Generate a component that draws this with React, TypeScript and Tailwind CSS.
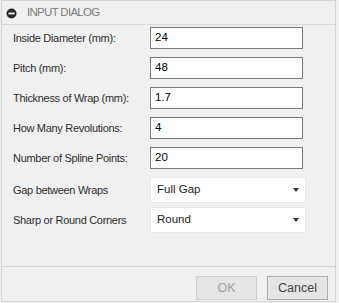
import type {ReactElement} from "react";

const fields = [
    {label: "Inside Diameter (mm):", value: "24"},
    {label: "Pitch (mm):", value: "48"},
    {label: "Thickness of Wrap (mm):", value: "1.7"},
    {label: "How Many Revolutions:", value: "4"},
    {label: "Number of Spline Points:", value: "20"},
];

const selects = [
    {label: "Gap between Wraps", value: "Full Gap"},
    {label: "Sharp or Round Corners", value: "Round"},
];

export default function App(): ReactElement {
    return (
        <div className="w-[339px] h-[303px] bg-[#f0f0f0] pl-[1px] font-['Liberation_Sans',Arial,sans-serif]">
            <div className="w-[335px] h-[302px] flex flex-col border border-[#d6d6d6]">
                { /* title bar */ }
                <div className="h-[24px] flex items-center border-b border-[#d9d9d9] pl-[4px]">
                    <svg width="11" height="11" viewBox="0 0 11 11" className="mt-[1px]">
                        <circle cx="5.5" cy="5.5" r="5" fill="#2b2b2b" />
                        <rect x="2.5" y="4.6" width="6" height="1.8" fill="#fff" />
                    </svg>
                    <span className="ml-[10px] text-[11.5px] tracking-[-0.7px] text-[#7d7d7d]">INPUT DIALOG</span>
                </div>

                { /* form body */ }
                <div className="flex-1 pt-[2px] pl-[11px] border-b border-[#d4d4d4]">
                    {fields.map((f) => (
                        <div key={f.label} className="flex items-center h-[22px] mb-[8px]">
                            <span className="w-[137px] text-[11px] tracking-[-0.3px] text-[#2e2e2e]">{f.label}</span>
                            <div className="w-[153px] h-[22px] flex items-center bg-white border border-[#7a7a7a] pl-[4px] text-[11.5px] text-black">
                                {f.value}
                            </div>
                        </div>
                    ))}
                    {selects.map((s) => (
                        <div key={s.label} className="flex items-center h-[26px] mb-[4px]">
                            <span className="w-[137px] text-[11px] tracking-[-0.3px] text-[#2e2e2e]">{s.label}</span>
                            <div className="w-[156px] h-[26px] flex items-center justify-between bg-white border border-[#e8e8e8] pl-[6px] pr-[6px] text-[11.5px] text-[#222]">
                                <span>{s.value}</span>
                                <svg width="6" height="4" viewBox="0 0 6 4">
                                    <path d="M0 0 H6 L3 4 Z" fill="#333" />
                                </svg>
                            </div>
                        </div>
                    ))}
                </div>

                { /* footer buttons */ }
                <div className="h-[34px] flex justify-end items-start pt-[9px] pr-[7px] gap-[10px]">
                    <button type="button" className="w-[61px] h-[24px] bg-[#e5e5e5] border border-[#cfcfcf] text-[12.5px] text-[#a0a0a0]">OK</button>
                    <button type="button" className="w-[61px] h-[24px] bg-[#e5e5e5] border border-[#adadad] text-[12.5px] text-[#444]">Cancel</button>
                </div>
            </div>
        </div>
    );
}
